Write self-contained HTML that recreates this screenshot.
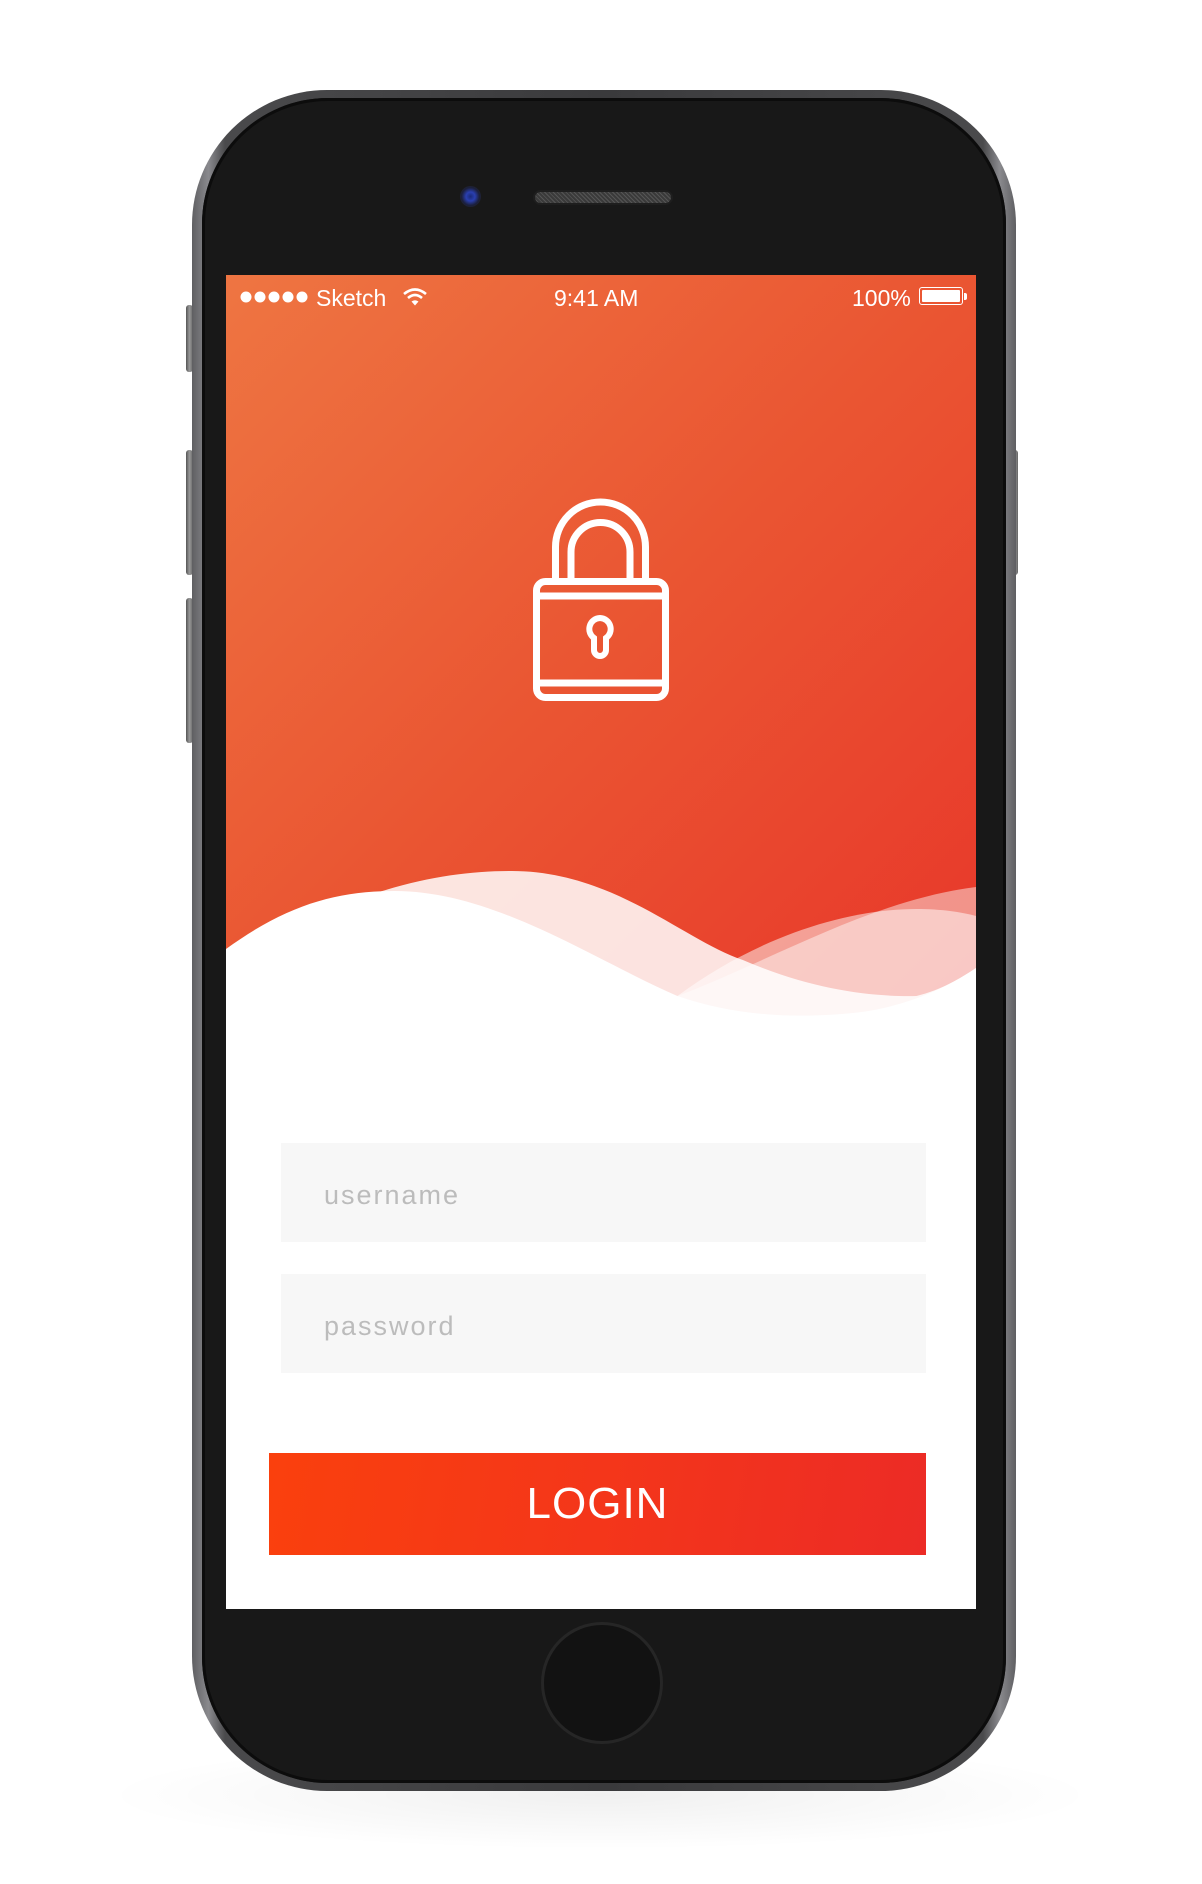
<!DOCTYPE html>
<html><head><meta charset="utf-8"><style>
html,body{margin:0;padding:0;background:#fff;}
body{width:1202px;height:1884px;position:relative;overflow:hidden;font-family:"Liberation Sans",sans-serif;}
.abs{position:absolute;}
.shadow{left:100px;top:1740px;width:1000px;height:110px;border-radius:50%;background:radial-gradient(ellipse at center,rgba(0,0,0,.06),rgba(0,0,0,0) 70%);}
.phone{left:192px;top:90px;width:824px;height:1701px;border-radius:135px;background:linear-gradient(90deg,#5f5f62,#8a8a8e 2%,#4a4a4c 4%,#3a3a3c 50%,#4a4a4c 96%,#8a8a8e 98%,#5f5f62);}
.bezel{left:202px;top:98px;width:804px;height:1685px;border-radius:126px;background:#181818;box-shadow:inset 0 0 0 3px #0c0c0c;}
.btn{background:linear-gradient(90deg,#555,#999,#666);border-radius:3px;width:7px;}
.screen{left:226px;top:275px;width:750px;height:1334px;overflow:hidden;background:#fff;}
.status{color:#fff;font-size:23px;top:10px;}
.field{left:55px;width:645px;height:99px;background:#f7f7f7;}
.ph{position:absolute;left:43px;top:37px;font-size:27px;color:#bcbcbc;letter-spacing:2px;}
</style></head><body>
<div class="abs shadow"></div>
<div class="abs btn" style="left:186px;top:305px;height:67px"></div>
<div class="abs btn" style="left:186px;top:450px;height:125px"></div>
<div class="abs btn" style="left:186px;top:598px;height:145px"></div>
<div class="abs btn" style="left:1011px;top:450px;height:125px"></div>
<div class="abs phone"></div>
<div class="abs bezel"></div>
<div class="abs" style="left:460px;top:186px;width:21px;height:21px;border-radius:50%;background:radial-gradient(circle,#1a2a7a 0,#2a3fb0 30%,#1b1f3a 60%,#2a2a2a 100%);"></div>
<div class="abs" style="left:535px;top:192px;width:136px;height:11px;border-radius:6px;background:repeating-linear-gradient(45deg,#3a3a3a 0 2px,#555 2px 3px);box-shadow:0 0 0 2px #1e1e1e;"></div>
<div class="abs" style="left:541px;top:1622px;width:122px;height:122px;border-radius:50%;border:3px solid #262626;box-sizing:border-box;background:#121212;"></div>
<div class="abs screen">
 <div class="abs" style="left:0;top:0;width:750px;height:760px;background:linear-gradient(135deg,#ee7542 0%,#ea5532 50%,#e8362a 100%);"></div>
 <svg class="abs" style="left:14px;top:15px" width="70" height="14" viewBox="0 0 70 14"><g fill="#fff"><circle cx="6" cy="7" r="5.5"/><circle cx="20" cy="7" r="5.5"/><circle cx="34" cy="7" r="5.5"/><circle cx="48" cy="7" r="5.5"/><circle cx="62" cy="7" r="5.5"/></g></svg>
 <div class="abs status" style="left:90px">Sketch</div>
 <svg class="abs" style="left:176px;top:12px" width="26" height="20" viewBox="0 0 26 20"><path d="M2 7 Q13 -2 24 7" stroke="#fff" stroke-width="2.6" fill="none"/><path d="M6 11 Q13 5 20 11" stroke="#fff" stroke-width="2.6" fill="none"/><path d="M9.5 14.5 L13 18.5 L16.5 14.5 Q13 12 9.5 14.5Z" fill="#fff"/></svg>
 <div class="abs status" style="left:328px">9:41 AM</div>
 <div class="abs status" style="left:626px">100%</div>
 <div class="abs" style="left:693px;top:12px;width:44px;height:18px;border:1.5px solid #fff;border-radius:3px;box-sizing:border-box;padding:2px"><div style="background:#fff;width:100%;height:100%;border-radius:1px"></div></div>
 <div class="abs" style="left:738px;top:18px;width:3px;height:7px;background:#fff;border-radius:0 2px 2px 0"></div>
 <svg class="abs" style="left:0;top:0" width="750" height="1334" viewBox="229 275 756 1334" preserveAspectRatio="none">
  <path d="M360 900 C420 878 470 871 517 871 C620 871 690 940 750 960 C820 990 880 997 925 996 C950 990 970 978 985 968 L985 1609 L229 1609 Z" fill="#fff" fill-opacity=".85"/>
  <path d="M684 996 C760 940 850 909 925 909 C950 909 970 912 985 916 L985 1609 L684 1609 Z" fill="#fff" fill-opacity=".5"/>
  <path d="M684 996 C780 960 880 900 985 887 L985 1609 L684 1609 Z" fill="#fff" fill-opacity=".45"/>
  <path d="M229 949 C290 905 340 891 399 891 C500 891 600 960 684 996 C740 1015 800 1020 870 1012 C920 1005 960 985 985 968 L985 1609 L229 1609 Z" fill="#fff"/>
 </svg>
 <svg class="abs" style="left:0;top:0" width="750" height="800" viewBox="226 275 750 800">
  <g fill="none" stroke="#fff" stroke-width="7">
   <path d="M555.5 581 V547 A45 45 0 0 1 645.5 547 V581"/>
   <path d="M571 581 V552 A29.5 29.5 0 0 1 630 552 V581"/>
   <rect x="536.5" y="581.5" width="129" height="116" rx="9"/>
   <line x1="538" y1="596" x2="664" y2="596"/>
   <line x1="538" y1="683" x2="664" y2="683"/>
  </g>
  <path d="M600 618 a11 11 0 0 1 6 20 v12 a6 6 0 0 1 -12 0 v-12 a11 11 0 0 1 6 -20z" fill="none" stroke="#fff" stroke-width="6"/>
 </svg>
 <div class="abs field" style="top:868px"><span class="ph">username</span></div>
 <div class="abs field" style="top:999px"><span class="ph">password</span></div>
 <div class="abs" style="left:80px;top:1210px;width:560px;height:40px;background:rgba(245,60,40,.55);filter:blur(14px);border-radius:20px"></div>
 <div class="abs" style="left:43px;top:1178px;width:657px;height:102px;background:linear-gradient(100deg,#fa400d,#f4361a 50%,#ec2b26);color:#fff;font-size:44px;text-align:center;line-height:102px;letter-spacing:1px;">LOGIN</div>
</div>
</body></html>
